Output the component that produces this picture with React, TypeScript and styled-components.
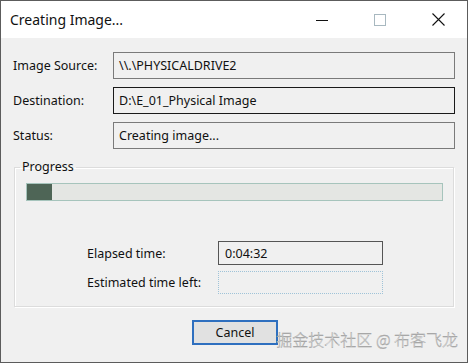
import React from 'react';
import styled, { createGlobalStyle } from 'styled-components';

const GlobalStyle = createGlobalStyle`
  html, body {
    margin: 0;
    padding: 0;
    background: #ffffff;
  }
  body {
    font-family: 'Noto Sans', 'Liberation Sans', sans-serif;
    color: #000;
  }
`;

interface FieldRow {
  label: string;
  value: string;
  focused?: boolean;
}

const rows: FieldRow[] = [
  { label: 'Image Source:', value: '\\\\.\\PHYSICALDRIVE2' },
  { label: 'Destination:', value: 'D:\\E_01_Physical Image', focused: true },
  { label: 'Status:', value: 'Creating image...' },
];

function App(): JSX.Element {
  const progress = 6;
  return (
    <>
      <GlobalStyle />
      <Window>
        <TitleBar>
          <Title>Creating Image...</Title>
          <Controls>
            <ControlButton>
              <svg width="12" height="12" viewBox="0 0 12 12">
                <line x1="0" y1="6.5" x2="12" y2="6.5" stroke="#111" strokeWidth="1" />
              </svg>
            </ControlButton>
            <ControlButton>
              <svg width="12" height="12" viewBox="0 0 12 12">
                <rect x="0.5" y="0.5" width="11" height="11" fill="none" stroke="#a8b8c0" strokeWidth="1" />
              </svg>
            </ControlButton>
            <ControlButton>
              <svg width="13" height="13" viewBox="0 0 13 13">
                <path d="M0.5 0.5 L12.5 12.5 M12.5 0.5 L0.5 12.5" stroke="#111" strokeWidth="1.1" />
              </svg>
            </ControlButton>
          </Controls>
        </TitleBar>
        <Body>
          <Fields>
            {rows.map((row) => (
              <React.Fragment key={row.label}>
                <Label>{row.label}</Label>
                <ValueBox $focused={row.focused}>{row.value}</ValueBox>
              </React.Fragment>
            ))}
          </Fields>
          <Group>
            <Legend>Progress</Legend>
            <ProgressTrack>
              <ProgressFill style={{ width: `${progress}%` }} />
            </ProgressTrack>
            <TimeGrid>
              <TimeLabel>Elapsed time:</TimeLabel>
              <TimeBox>0:04:32</TimeBox>
              <TimeLabel>Estimated time left:</TimeLabel>
              <TimeBox $empty />
            </TimeGrid>
          </Group>
          <Footer>
            <CancelButton>Cancel</CancelButton>
          </Footer>
          <Watermark>掘金技术社区 @ 布客飞龙</Watermark>
        </Body>
      </Window>
    </>
  );
}

const Window = styled.div`
  position: relative;
  width: 468px;
  height: 363px;
  box-sizing: border-box;
  border: 1px solid #5c5c5c;
  display: flex;
  flex-direction: column;
  overflow: hidden;
`;

const TitleBar = styled.div`
  height: 37px;
  background: #ffffff;
  display: flex;
  align-items: center;
  justify-content: space-between;
  padding-left: 9px;
`;

const Title = styled.span`
  font-family: 'Noto Sans', sans-serif;
  font-size: 14px;
  color: #111;
`;

const Controls = styled.div`
  display: flex;
  height: 100%;
`;

const ControlButton = styled.div`
  width: 58px;
  height: 100%;
  display: flex;
  align-items: center;
  justify-content: center;
`;

const Body = styled.div`
  flex: 1;
  background: #f0f0f0;
  padding: 14px 12px 0 12px;
  display: flex;
  flex-direction: column;
`;

const Fields = styled.div`
  display: grid;
  grid-template-columns: 100px 342px;
  grid-auto-rows: 27px;
  row-gap: 8px;
  align-items: center;
`;

const Label = styled.span`
  font-size: 12.5px;
  color: #111;
`;

const ValueBox = styled.div<{ $focused?: boolean }>`
  height: 27px;
  box-sizing: border-box;
  border: 1px solid ${({ $focused }) => ($focused ? '#1a1a1a' : '#7a7a7a')};
  padding: 0 5px;
  display: flex;
  align-items: center;
  font-size: 12.5px;
  color: #111;
  background: #f0f0f0;
`;

const Group = styled.fieldset`
  margin: 10px 1px 0 1px;
  padding: 8px 10px 10px 11px;
  border: 1px solid #dcdcdc;
  box-shadow: inset 1px 1px 0 #ffffff, 1px 1px 0 #ffffff;
  min-inline-size: 0;
  height: 148px;
  box-sizing: border-box;
`;

const Legend = styled.legend`
  font-size: 12.5px;
  color: #111;
  padding: 0 2px;
  margin-left: -6px;
  line-height: 16px;
`;

const ProgressTrack = styled.div`
  height: 18px;
  box-sizing: border-box;
  border: 1px solid #a6c4bc;
  background: #e4e6e3;
  display: flex;
`;

const ProgressFill = styled.div`
  height: 100%;
  background: #4e6556;
`;

const TimeGrid = styled.div`
  display: grid;
  grid-template-columns: 131px 165px;
  grid-template-rows: 24px 23px;
  row-gap: 6px;
  align-items: center;
  margin-top: 40px;
  margin-left: 61px;
`;

const TimeLabel = styled.span`
  font-size: 12.5px;
  color: #111;
`;

const TimeBox = styled.div<{ $empty?: boolean }>`
  height: 100%;
  box-sizing: border-box;
  border: 1px ${({ $empty }) => ($empty ? 'dotted #9fc3d8' : 'solid #555')};
  padding: 0 6px;
  display: flex;
  align-items: center;
  font-size: 12.5px;
  color: #111;
`;

const Footer = styled.div`
  display: flex;
  justify-content: center;
  margin-top: 13px;
`;

const CancelButton = styled.button`
  width: 86px;
  height: 25px;
  box-sizing: border-box;
  border: 2px solid #2e6fbf;
  background: #e1e1e1;
  font-family: 'Noto Sans', sans-serif;
  font-size: 12.5px;
  color: #111;
  padding: 0;
  margin-left: 2px;
`;

const Watermark = styled.div`
  position: absolute;
  right: 9px;
  bottom: 11px;
  font-family: 'Noto Sans CJK SC', sans-serif;
  font-size: 16px;
  font-weight: 300;
  color: #f2f2f2;
  -webkit-text-stroke: 0.4px #9a9a9a;
`;

export default App;
